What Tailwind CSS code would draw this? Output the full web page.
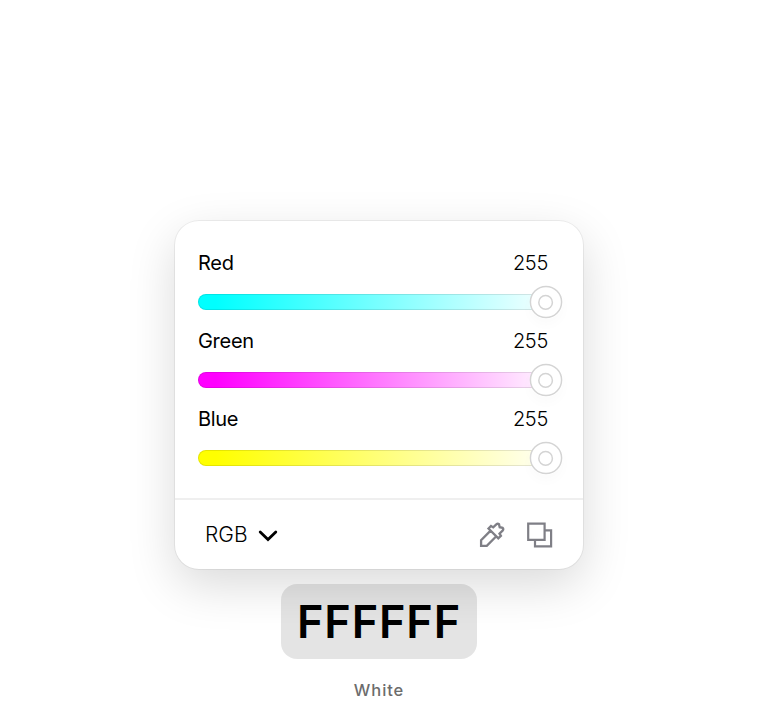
<!DOCTYPE html>
<html lang="en">
<head>
<meta charset="utf-8">
<title>Color Picker</title>
<script src="https://cdn.jsdelivr.net/npm/@tailwindcss/browser@4"></script>
</head>
<body class="bg-white text-black font-['Inter',sans-serif] overflow-hidden">
<main class="w-[758px] h-[708px] pt-[221px] flex flex-col items-center">
  <section class="w-[408px] h-[348px] shrink-0 rounded-[24px] bg-white flex flex-col shadow-[0_0_0_1px_rgba(0,0,0,0.06),0_16px_48px_rgba(0,0,0,0.15)]">
    <div class="h-[279px] pt-[27px] pl-[23px] pr-[21px] border-b-2 border-[#efefef]">
      <div class="h-[78px]">
        <div class="flex justify-between pr-[14px] text-[20px] leading-[30px] tracking-[-0.3px]"><span>Red</span><span class="font-light">255</span></div>
        <div class="mt-2 h-[32px] flex items-center relative">
          <div class="w-[350px] h-[16px] rounded-full bg-linear-to-r/srgb from-[#00ffff] from-5% to-white to-104% border-[1.5px] border-black/10 bg-origin-border"></div>
          <svg class="absolute right-[-1px] top-[-1px] rounded-full shadow-[0_6px_12px_rgba(0,0,0,0.02)]" width="34" height="34" viewBox="0 0 34 34" fill="white" stroke="#d4d4d4" stroke-width="1.5"><circle cx="17" cy="17" r="15.6"/><circle cx="16.6" cy="17.4" r="6.8"/></svg>
        </div>
      </div>
      <div class="h-[78px]">
        <div class="flex justify-between pr-[14px] text-[20px] leading-[30px] tracking-[-0.3px]"><span>Green</span><span class="font-light">255</span></div>
        <div class="mt-2 h-[32px] flex items-center relative">
          <div class="w-[350px] h-[16px] rounded-full bg-linear-to-r/srgb from-[#ff00ff] from-5% to-white to-104% border-[1.5px] border-black/10 bg-origin-border"></div>
          <svg class="absolute right-[-1px] top-[-1px] rounded-full shadow-[0_6px_12px_rgba(0,0,0,0.02)]" width="34" height="34" viewBox="0 0 34 34" fill="white" stroke="#d4d4d4" stroke-width="1.5"><circle cx="17" cy="17" r="15.6"/><circle cx="16.6" cy="17.4" r="6.8"/></svg>
        </div>
      </div>
      <div class="h-[78px]">
        <div class="flex justify-between pr-[14px] text-[20px] leading-[30px] tracking-[-0.3px]"><span>Blue</span><span class="font-light">255</span></div>
        <div class="mt-2 h-[32px] flex items-center relative">
          <div class="w-[350px] h-[16px] rounded-full bg-linear-to-r/srgb from-[#ffff00] from-5% to-white to-104% border-[1.5px] border-black/10 bg-origin-border"></div>
          <svg class="absolute right-[-1px] top-[-1px] rounded-full shadow-[0_6px_12px_rgba(0,0,0,0.02)]" width="34" height="34" viewBox="0 0 34 34" fill="white" stroke="#d4d4d4" stroke-width="1.5"><circle cx="17" cy="17" r="15.6"/><circle cx="16.6" cy="17.4" r="6.8"/></svg>
        </div>
      </div>
    </div>
    <div class="h-[69px] pl-[30px] pr-[30px] flex items-center">
      <span class="text-[21px] leading-[30px] font-light mt-px">RGB</span>
      <svg class="ml-[10px] mt-[3px]" width="20" height="14" viewBox="0 0 20 14" fill="none" stroke="black" stroke-width="2.8" stroke-linecap="round" stroke-linejoin="miter"><path d="M2.2 3 10 10.6 17.8 3"/></svg>
      <svg class="ml-auto mr-px mt-px" width="26" height="26" viewBox="0 0 26 26" fill="none" stroke="#7f7f86" stroke-width="2.3" stroke-linejoin="miter"><path d="M11.6 8.6 2.1 18.2V23.9H7.8L17.3 14.3M9.5 6.5 12 4 14.2 5.4 17.3 2.4Q18.7 1.2 20 2.2L20.7 5.2 23.6 5.9Q24.9 7.3 23.6 8.7L20.5 11.7 21.9 13.9 19.3 16.3Z"/></svg>
      <svg class="ml-[21px] mt-px" width="26" height="26" viewBox="0 0 26 26" fill="none" stroke="#7f7f86" stroke-width="2.2"><path d="M1.2 1.6H17.6V17.8H1.2ZM17.6 8.4H24.1V24.4H8V17.8"/></svg>
    </div>
  </section>
  <div class="mt-[15px] w-[196px] h-[75px] shrink-0 rounded-[16px] bg-black/[0.106] flex items-center justify-center text-[45px] leading-none font-semibold tracking-[0.9px]">FFFFFF</div>
  <div class="mt-[19px] text-[16.5px] leading-[24px] font-medium tracking-[0.9px] text-[#6c6c6c]">White</div>
</main>
</body>
</html>
